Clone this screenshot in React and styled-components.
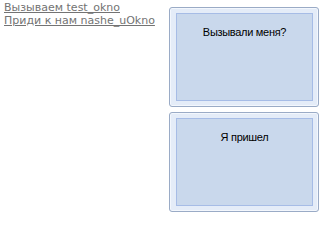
import styled, { createGlobalStyle } from 'styled-components'

const GlobalStyle = createGlobalStyle`
  html, body {
    margin: 0;
    padding: 0;
    background: #ffffff;
  }
`

// ─── Layout ───────────────────────────────────────────────────────────────────

const Page = styled.div`
  display: flex;
  justify-content: space-between;
  align-items: flex-start;
  width: 325px;
  height: 216px;
  box-sizing: border-box;
  padding: 1px 6px 0 4px;
`

const LinkList = styled.div`
  display: flex;
  flex-direction: column;
`

const NavLink = styled.a`
  font-family: 'DejaVu Sans', Verdana, sans-serif;
  font-size: 11px;
  line-height: 13px;
  color: #737373;
  text-decoration: underline;
  cursor: pointer;
`

const WindowStack = styled.div`
  display: flex;
  flex-direction: column;
  gap: 5px;
  padding-top: 6px;
`

// ─── Window frame ─────────────────────────────────────────────────────────────

const Frame = styled.div`
  width: 150px;
  height: 100px;
  box-sizing: border-box;
  padding: 5px 5px 5px 6px;
  border: 1px solid #9aabc6;
  border-radius: 3px;
  background-color: #e4ecf8;
  box-shadow: inset 0 0 0 1px #f3f7fd;
`

const Panel = styled.div`
  height: 100%;
  box-sizing: border-box;
  border: 1px solid #a6bce6;
  background-color: #c9d8ec;
  padding-top: 12px;
  text-align: center;
  font-family: 'Liberation Sans', Arial, sans-serif;
  font-size: 11px;
  letter-spacing: -0.3px;
  color: #000000;
`

function Window({ children }) {
  return (
    <Frame>
      <Panel>{children}</Panel>
    </Frame>
  )
}

export default function App() {
  return (
    <>
      <GlobalStyle />
      <Page>
        <LinkList>
          <NavLink>Вызываем test_okno</NavLink>
          <NavLink>Приди к нам nashe_uOkno</NavLink>
        </LinkList>
        <WindowStack>
          <Window>Вызывали меня?</Window>
          <Window>Я пришел</Window>
        </WindowStack>
      </Page>
    </>
  )
}
